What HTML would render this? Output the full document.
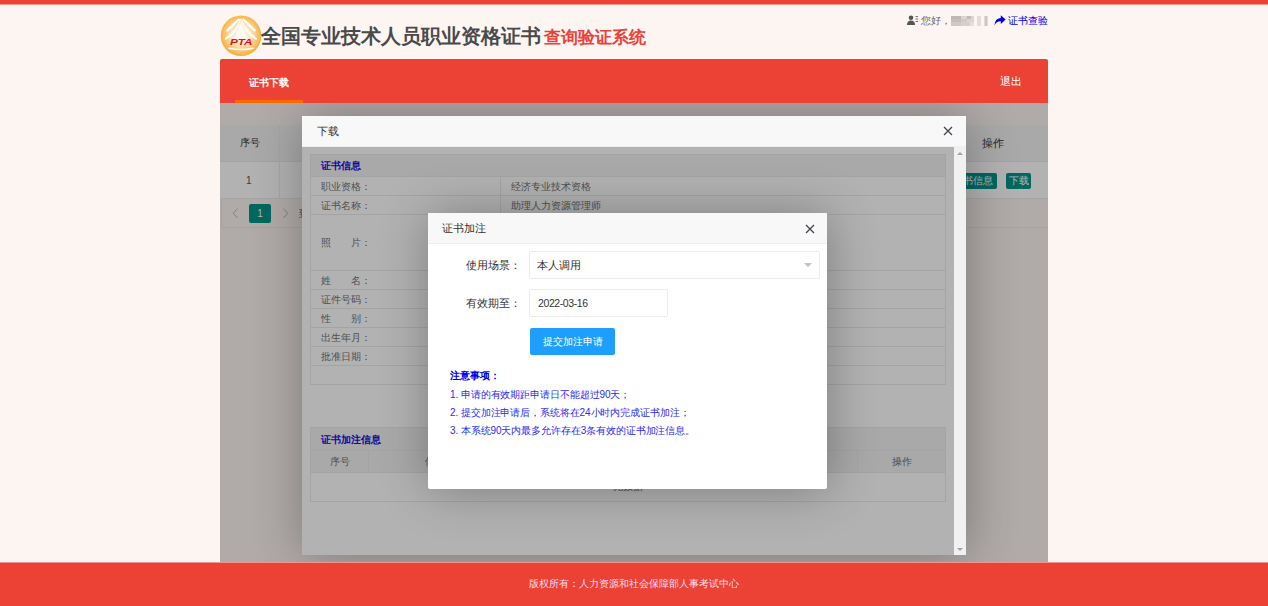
<!DOCTYPE html>
<html><head><meta charset="utf-8">
<style>
*{margin:0;padding:0;box-sizing:border-box}
html,body{width:1268px;height:606px;overflow:hidden}
body{background:#fdf5f2;font-family:"Liberation Sans",sans-serif;position:relative;color:#333}
.a{position:absolute}
.topbar{left:0;top:0;width:1268px;height:4px;background:#ec4236;box-shadow:0 1px 0 #f4978f}
.logo{left:221px;top:15px;width:41px;height:41px;border-radius:50%;background:radial-gradient(circle at 50% 45%,#fff6e6 0,#fde2b0 40%,#f7b44a 80%,#f4a630 100%)}
.title{left:261px;top:22px;font-size:20px;font-weight:bold;color:#4a4a4a;white-space:nowrap;line-height:28px}
.title span{color:#e8433a;font-size:17.2px;margin-left:3px}
.tr{top:14px;font-size:10px;line-height:14px;white-space:nowrap;color:#666}
.nav{left:220px;top:59px;width:828px;height:44px;background:#ec4236;border-radius:2px 2px 0 0}
.nav .t{left:29px;top:15.5px;font-size:10px;color:#fff;font-weight:bold;line-height:16px}
.nav .u{left:15px;top:41px;width:68px;height:3px;background:#ff6a00}
.nav .x{left:780px;top:14px;font-size:10.5px;color:#fff;line-height:16px}
.content{left:220px;top:103px;width:828px;height:459px;overflow:hidden;background:#fdf5f2}
.shade{left:0;top:0;width:100%;height:100%;background:rgba(0,0,0,.3)}
.footer{left:0;top:563px;width:1268px;height:43px;background:#ec4236;box-shadow:0 -1px 0 rgba(236,66,54,.55);color:#fde;font-size:10px;text-align:center;line-height:42px}
.modal{background:#fff;border-radius:2px;box-shadow:1px 1px 50px rgba(0,0,0,.3)}
.mt{left:0;top:0;width:100%;height:31px;background:#f8f8f8;border-bottom:1px solid #eee;font-size:10.5px;color:#333;line-height:30px;padding-left:15px}
.close{width:10px;height:10px}
table{border-collapse:collapse}
.tb td{border:1px solid #ebebeb;font-size:10px;color:#727272;line-height:17px;padding:0 10px;height:19px}
.blue{color:#1010e0;font-weight:bold}
</style></head><body>
<div class="a topbar"></div>
<svg class="a" style="left:220px;top:15px" width="42" height="42" viewBox="0 0 42 42">
<defs><radialGradient id="lg" cx="50%" cy="48%" r="50%"><stop offset="0" stop-color="#fffdf8"/><stop offset="0.45" stop-color="#fde9c8"/><stop offset="0.78" stop-color="#fbc878"/><stop offset="1" stop-color="#f8b03e"/></radialGradient></defs>
<circle cx="21" cy="20.8" r="20.3" fill="url(#lg)"/>
<path d="M18.5 3.4 Q11.5 9 6 15.2 L7.2 17 Q13.5 11.8 19.8 4.4Z" fill="#fff"/>
<path d="M23.5 3.4 Q30.5 9 36 15.2 L34.8 17 Q28.5 11.8 22.2 4.4Z" fill="#fff"/>
<path d="M20.3 3.6 Q15.5 16.5 4.8 23.2 L5.4 25 Q17.5 19.5 21 4.5Z" fill="#fff"/>
<path d="M21.7 3.6 Q26.5 16.5 37.2 23.2 L36.6 25 Q24.5 19.5 21 4.5Z" fill="#fff"/>
<path d="M21 4 Q18.5 16 14 24 L28 24 Q23.5 16 21 4Z" fill="#fffaf3" opacity="0.85"/>
<path d="M8.5 33.2 Q21 35.6 33.5 33.2" stroke="#fff" stroke-width="1.5" fill="none"/>
<text x="10" y="29.6" textLength="22.5" lengthAdjust="spacingAndGlyphs" font-family="Liberation Sans" font-weight="bold" font-style="italic" font-size="8.6" fill="#e8101a">PTA</text>
</svg>
<div class="a title">全国专业技术人员职业资格证书<span>查询验证系统</span></div>
<div class="a tr" style="left:907px;width:11px;height:10px;top:15px">
  <svg width="11" height="10" viewBox="0 0 11 10"><circle cx="4" cy="2.8" r="2.3" fill="#555"/><path d="M0 10 Q0 5.5 4 5.5 Q8 5.5 8 10Z" fill="#555"/><rect x="8.5" y="1" width="2.5" height="1" fill="#777"/><rect x="8.5" y="3.5" width="2.5" height="1" fill="#777"/><rect x="8.5" y="6" width="2.5" height="1" fill="#777"/></svg>
</div>
<div class="a tr" style="left:921px">您好，</div>
<svg class="a" style="left:951px;top:16px" width="38" height="10" viewBox="0 0 38 10" shape-rendering="crispEdges">
<rect x="0" y="0" width="9.5" height="3" fill="#bdb7b5"/><rect x="9.5" y="0" width="6.5" height="3" fill="#ddd5d3"/><rect x="16" y="0" width="4" height="3" fill="#bfb9b7"/><rect x="20" y="0" width="3" height="3" fill="#ddd5d3"/>
<rect x="0" y="3" width="10" height="3" fill="#c3bdbb"/><rect x="10" y="3" width="6" height="3" fill="#d0cac8"/><rect x="16" y="3" width="7" height="3" fill="#dcd4d2"/>
<rect x="0" y="6" width="10" height="4" fill="#cec8c6"/><rect x="10" y="6" width="9" height="4" fill="#d5cfcd"/><rect x="19" y="6" width="4" height="4" fill="#e6dedc"/>
<rect x="26" y="0" width="4" height="10" fill="#e3dcda"/><rect x="33" y="0" width="4" height="10" fill="#e0d9d7"/><rect x="34" y="0" width="2" height="10" fill="#cdc6c4"/>
</svg>
<div class="a" style="left:994px;top:15px;width:12px;height:11px">
  <svg style="display:block" width="12" height="11" viewBox="0 0 12 11"><path d="M6.8 0.3 L11.6 4.6 L6.8 8.9 L6.8 6.3 C3.8 6.2 1.8 7.5 0.6 10.6 C0.6 5.6 3 3.2 6.8 2.9 Z" fill="#0000f0"/></svg>
</div>
<div class="a tr" style="left:1008px;color:#0000ee">证书查验</div>

<div class="a nav">
  <div class="a t">证书下载</div>
  <div class="a u"></div>
  <div class="a x">退出</div>
</div>

<div class="a content">
  <!-- main table -->
  <div class="a" style="left:0;top:22px;width:828px;height:37px;background:#f2f2f2;border-bottom:1px solid #ebebeb"></div>
  <div class="a" style="left:0;top:59px;width:828px;height:37px;background:#fff"></div>
  <div class="a" style="left:59px;top:22px;width:1px;height:74px;background:#ededed"></div>
  <div class="a" style="left:19.5px;top:33px;font-size:10px;color:#333;line-height:14px">序号</div>
  <div class="a" style="left:762px;top:33px;font-size:10.5px;color:#333;line-height:14px">操作</div>
  <div class="a" style="left:26px;top:71px;font-size:10px;color:#555;line-height:14px">1</div>
  <div class="a" style="left:723px;top:70px;width:54px;height:16px;background:#009688;border-radius:2px;color:#fff;font-size:10px;line-height:16px;text-align:center;padding-left:6px">证书信息</div>
  <div class="a" style="left:786px;top:70px;width:25px;height:16px;background:#009688;border-radius:2px;color:#fff;font-size:10px;line-height:16px;text-align:center">下载</div>
  <div class="a" style="left:1px;top:95px;width:827px;height:30px;border:1px solid #ebebeb;border-right:0"></div>
  <svg class="a" style="left:12px;top:105px" width="7" height="11" viewBox="0 0 7 11"><path d="M5.6 0.6 L1.2 5.3 L5.6 10" fill="none" stroke="#a8a8a8" stroke-width="0.8"/></svg>
  <div class="a" style="left:29px;top:101px;width:22px;height:19px;background:#009688;border-radius:2px;color:#fff;font-size:10px;line-height:19px;text-align:center">1</div>
  <svg class="a" style="left:62px;top:105px" width="7" height="11" viewBox="0 0 7 11"><path d="M1.4 0.6 L5.8 5.3 L1.4 10" fill="none" stroke="#a8a8a8" stroke-width="0.8"/></svg>
  <div class="a" style="left:79px;top:104px;font-size:10px;color:#666;line-height:14px">到第</div>
  <div class="a shade"></div>

  <!-- modal 1 -->
  <div class="a modal" style="left:82px;top:13px;width:664px;height:439px">
    <div class="a mt">下载</div>
    <div class="a close" style="left:641px;top:10px"><svg width="10" height="10" viewBox="0 0 10 10" style="display:block"><path d="M1 1 L9 9 M9 1 L1 9" stroke="#45454f" stroke-width="1.3"/></svg></div>
    <div class="a" style="left:0;top:31px;width:652px;height:408px;overflow:hidden;background:#fff">
      <!-- iframe content -->
      <table class="a tb" style="left:8px;top:7px;width:636px">
        <tr><td colspan="2" style="background:#f2f2f2;height:22px"><span class="blue">证书信息</span></td></tr>
        <tr><td style="width:190px">职业资格：</td><td>经济专业技术资格</td></tr>
        <tr><td>证书名称：</td><td>助理人力资源管理师</td></tr>
        <tr><td style="height:56px">照<span style="display:inline-block;width:20px"></span>片：</td><td></td></tr>
        <tr><td>姓<span style="display:inline-block;width:20px"></span>名：</td><td></td></tr>
        <tr><td>证件号码：</td><td></td></tr>
        <tr><td>性<span style="display:inline-block;width:20px"></span>别：</td><td></td></tr>
        <tr><td>出生年月：</td><td></td></tr>
        <tr><td>批准日期：</td><td></td></tr>
        <tr><td style="height:18px"></td><td></td></tr>
      </table>
      <table class="a tb" style="left:8px;top:280px;width:636px">
        <tr><td colspan="5" style="background:#f2f2f2;height:23px"><span class="blue">证书加注信息</span></td></tr>
        <tr style="background:#f2f2f2"><td style="width:58px;text-align:center;height:22px">序号</td><td style="width:152px;text-align:center;padding:0">使用场景</td><td style="width:167px;text-align:center">有效期至</td><td style="width:170px;text-align:center">申请时间</td><td style="text-align:center">操作</td></tr>
        <tr><td colspan="5" style="height:29px;text-align:center;padding-bottom:2px">无数据</td></tr>
      </table>
      <div class="a shade"></div>
      <!-- modal 2 -->
      <div class="a modal" style="left:126px;top:66px;width:399px;height:276px">
        <div class="a mt" style="padding-left:14px">证书加注</div>
        <div class="a close" style="left:376.5px;top:11px"><svg width="10" height="10" viewBox="0 0 10 10" style="display:block"><path d="M1 1 L9 9 M9 1 L1 9" stroke="#45454f" stroke-width="1.3"/></svg></div>
        <div class="a" style="right:306px;top:45px;font-size:10.5px;color:#333;line-height:14px;white-space:nowrap">使用场景：</div>
        <div class="a" style="left:101px;top:38px;width:291px;height:28px;border:1px solid #ececec;border-radius:1.5px;font-size:10.5px;line-height:26px;padding-left:6.5px;color:#333">本人调用</div>
        <div class="a" style="left:376px;top:50px;width:0;height:0;border-left:4.2px solid transparent;border-right:4.2px solid transparent;border-top:4.2px solid #c2c2c2"></div>
        <div class="a" style="right:306px;top:83px;font-size:10.5px;color:#333;line-height:14px;white-space:nowrap">有效期至：</div>
        <div class="a" style="left:101px;top:76px;width:139px;height:28px;border:1px solid #ececec;border-radius:1.5px;font-size:10.5px;line-height:26px;padding-left:8px;color:#333;letter-spacing:-0.4px">2022-03-16</div>
        <div class="a" style="left:102px;top:115px;width:85px;height:27px;background:#1e9fff;border-radius:2px;font-size:10px;line-height:27px;text-align:center;color:#fff">提交加注申请</div>
        <div class="a" style="left:22px;top:156px;font-size:10px;line-height:14px;color:#0000ee;font-weight:bold">注意事项：</div>
        <div class="a" style="left:22px;top:175px;font-size:10px;line-height:14px;color:#2b2bf0;white-space:nowrap;letter-spacing:-0.1px">1. 申请的有效期距申请日不能超过90天；</div>
        <div class="a" style="left:22px;top:193px;font-size:10px;line-height:14px;color:#2b2bf0;white-space:nowrap;letter-spacing:-0.1px">2. 提交加注申请后，系统将在24小时内完成证书加注；</div>
        <div class="a" style="left:22px;top:211px;font-size:10px;line-height:14px;color:#2b2bf0;white-space:nowrap;letter-spacing:-0.1px">3. 本系统90天内最多允许存在3条有效的证书加注信息。</div>
      </div>
    </div>
    <!-- scrollbar -->
    <div class="a" style="left:652px;top:31px;width:12px;height:408px;background:#f1f1f1"></div>
    <div class="a" style="left:655px;top:35.5px;width:0;height:0;border-left:3.2px solid transparent;border-right:3.2px solid transparent;border-bottom:3.2px solid #a3a3a3"></div>
    <div class="a" style="left:655px;top:432px;width:0;height:0;border-left:3.2px solid transparent;border-right:3.2px solid transparent;border-top:3.2px solid #a3a3a3"></div>
  </div>
</div>

<div class="a footer">版权所有：人力资源和社会保障部人事考试中心</div>
</body></html>
